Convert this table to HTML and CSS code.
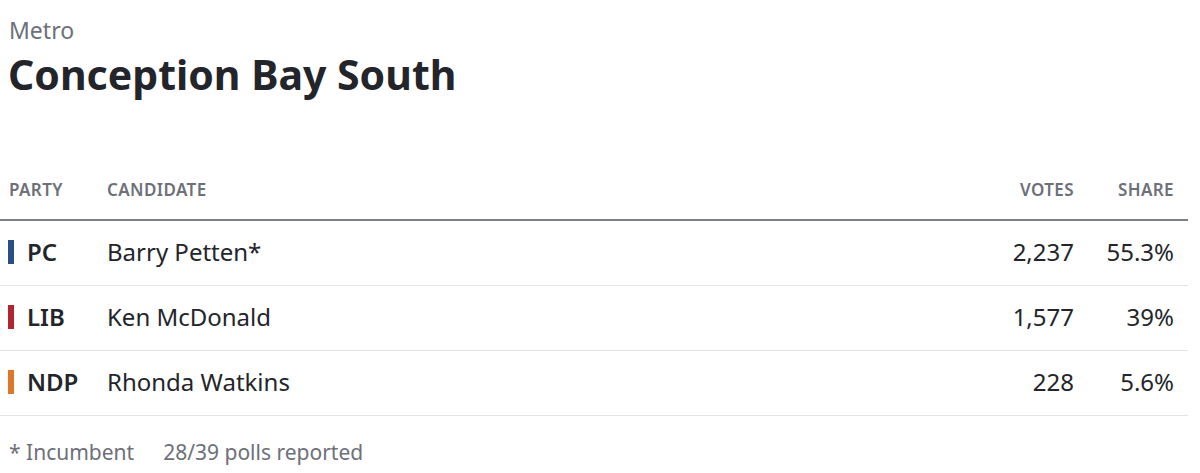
FILE: index.html
```html
<!DOCTYPE html>
<html lang="en">
<head>
<meta charset="utf-8">
<title>Conception Bay South</title>
<link rel="stylesheet" href="styles.css">
</head>
<body>
<div class="page">
  <div class="region">Metro</div>
  <h1 class="riding">Conception Bay South</h1>
  <div class="results">
    <div class="row head">
      <div class="c-party">Party</div>
      <div class="c-cand">Candidate</div>
      <div class="c-votes">Votes</div>
      <div class="c-share">Share</div>
    </div>
    <div class="row">
      <div class="c-party"><span class="bar pc"></span>PC</div>
      <div class="c-cand">Barry Petten*</div>
      <div class="c-votes">2,237</div>
      <div class="c-share">55.3%</div>
    </div>
    <div class="row">
      <div class="c-party"><span class="bar lib"></span>LIB</div>
      <div class="c-cand">Ken McDonald</div>
      <div class="c-votes">1,577</div>
      <div class="c-share">39%</div>
    </div>
    <div class="row">
      <div class="c-party"><span class="bar ndp"></span>NDP</div>
      <div class="c-cand">Rhonda Watkins</div>
      <div class="c-votes">228</div>
      <div class="c-share">5.6%</div>
    </div>
  </div>
  <div class="foot">
    <span>* Incumbent</span>
    <span>28/39 polls reported</span>
  </div>
</div>
</body>
</html>
```
FILE: styles.css
```css
* { box-sizing: border-box; }
html, body { margin: 0; padding: 0; background: #fff; }
body {
  font-family: "Noto Sans", "Open Sans", sans-serif;
  color: #23252b;
}
.page {
  width: 1188px;
  padding-top: 15px;
}
.region {
  padding-left: 9px;
  font-size: 23px;
  line-height: 30px;
  color: #6d7079;
}
.riding {
  margin: 2px 0 0;
  padding-left: 8px;
  font-size: 41px;
  line-height: 54px;
  font-weight: 700;
  color: #23252b;
}
.results {
  margin-top: 67px;
}
.row {
  display: grid;
  grid-template-columns: 107px 1fr 120px 100px;
  align-items: center;
  height: 65px;
  padding-right: 14px;
  padding-bottom: 3px;
  border-bottom: 1px solid #e3e3e5;
  font-size: 24px;
}
.row.head {
  height: 53px;
  border-bottom: 2px solid #7d8089;
  font-size: 17px;
  font-weight: 600;
  text-transform: uppercase;
  letter-spacing: 0.4px;
  color: #6d7079;
  padding-bottom: 8px;
}
.c-party {
  display: flex;
  align-items: center;
  padding-left: 8px;
  font-weight: 600;
}
.head .c-party { padding-left: 9px; }
.c-votes, .c-share { text-align: right; }
.bar {
  display: inline-block;
  width: 6px;
  height: 24px;
  margin-right: 13px;
}
.bar.pc { background: #2a4f85; }
.bar.lib { background: #b0262f; }
.bar.ndp { background: #e0762b; }
.foot {
  display: flex;
  gap: 29px;
  padding: 22px 0 0 9px;
  font-size: 21px;
  line-height: 28px;
  color: #6d7079;
}
```
